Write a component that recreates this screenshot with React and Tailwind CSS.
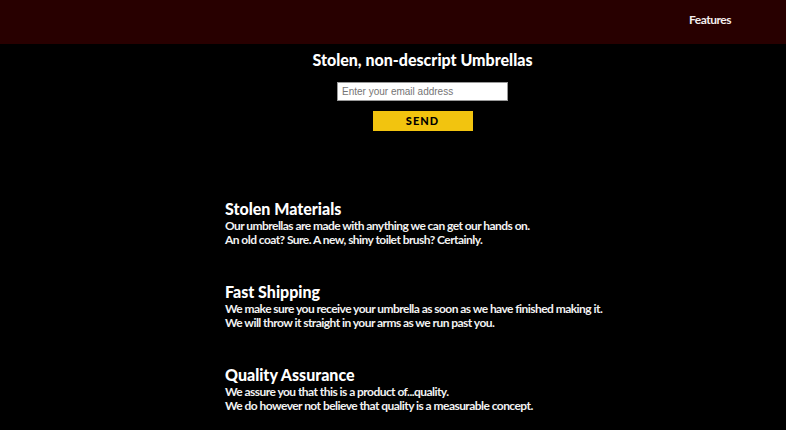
import React from "react";

const FEATURES = [
  {
    title: "Stolen Materials",
    lines: [
      "Our umbrellas are made with anything we can get our hands on.",
      "An old coat? Sure. A new, shiny toilet brush? Certainly.",
    ],
  },
  {
    title: "Fast Shipping",
    lines: [
      "We make sure you receive your umbrella as soon as we have finished making it.",
      "We will throw it straight in your arms as we run past you.",
    ],
  },
  {
    title: "Quality Assurance",
    lines: [
      "We assure you that this is a product of...quality.",
      "We do however not believe that quality is a measurable concept.",
    ],
  },
];

const App = () => {
  return (
    <div className="min-h-[430px] w-full bg-black text-white font-['Lato',sans-serif] overflow-hidden">
      <header className="h-[44px] bg-[#280000] flex items-center justify-end pr-[55px] pb-[4px]">
        <a className="text-[12px] font-bold tracking-[-0.5px] text-[#f4eeee]">Features</a>
      </header>

      <section className="flex flex-col items-center pt-[6px] pl-[59px]">
        <h1 className="text-[16px] font-black leading-[20px] tracking-[0px]">
          Stolen, non-descript Umbrellas
        </h1>
        <input
          type="email"
          placeholder="Enter your email address"
          className="mt-[12px] w-[171px] h-[19px] bg-white px-[4px] text-[10px] text-black font-['Liberation_Sans',sans-serif] placeholder:text-[#757575] border border-[#999] outline-none"
        />
        <button className="mt-[10px] w-[100px] h-[20px] bg-[#f2c40f] text-black text-[11px] font-black tracking-[1px] flex items-center justify-center">
          SEND
        </button>
      </section>

      <main className="pl-[225px] pt-[68px] flex flex-col gap-[35px]">
        {FEATURES.map((f) => (
          <div key={f.title}>
            <h2 className="text-[16px] font-black leading-[20px] tracking-[0px]">{f.title}</h2>
            <p className="text-[12px] font-bold leading-[14px] tracking-[-0.55px] text-[#f2f2f2]">
              {f.lines[0]}
              <br />
              {f.lines[1]}
            </p>
          </div>
        ))}
      </main>
    </div>
  );
};

export default App;
